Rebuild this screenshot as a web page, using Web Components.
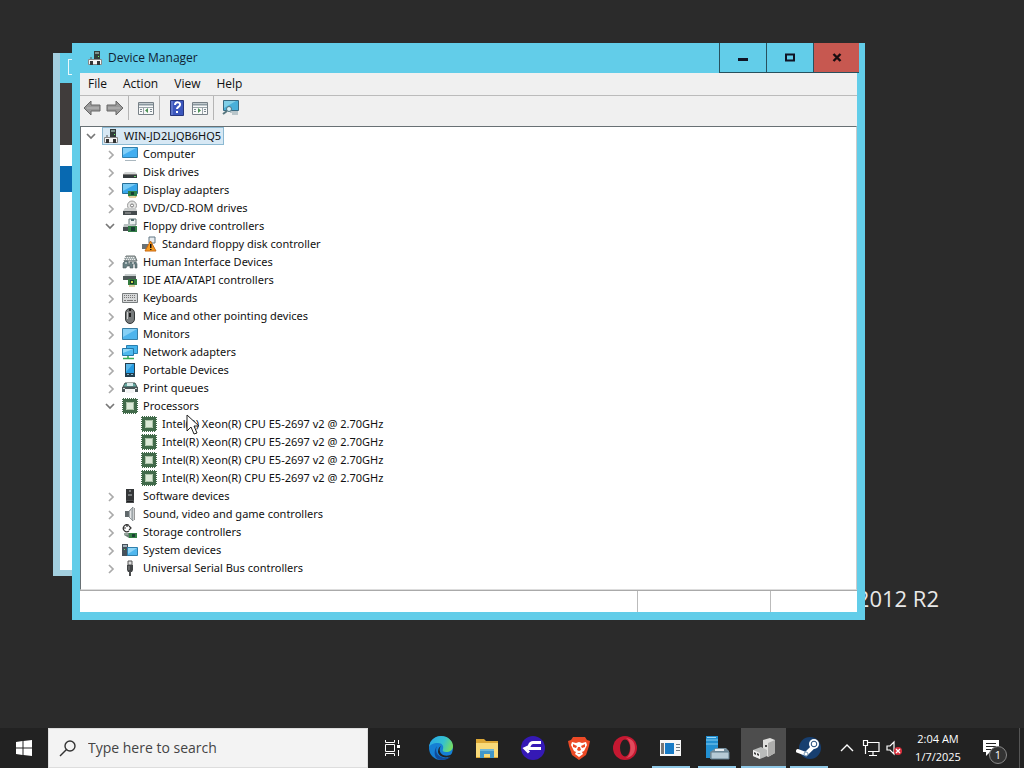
<!DOCTYPE html>
<html lang="en">
<head>
<meta charset="utf-8">
<meta name="viewport" content="width=device-width, initial-scale=1">
<title>Device Manager</title>
<style>
    html, body {
        height: 100%;
        margin: 0;
    }
    body {
        display: flex;
        flex-direction: column;
        overflow: hidden;
        background: #2b2b2b;
        color: #111;
        font: 11px/18px "Open Sans", "Noto Sans", sans-serif;
    }
</style>
</head>
<body>
<dm-desktop>
    <dm-back-window></dm-back-window>
    <dm-window heading="Device Manager">
        <dm-menu-bar slot="bars"></dm-menu-bar>
        <dm-tool-bar slot="bars"></dm-tool-bar>
        <dm-tree></dm-tree>
        <dm-status-bar slot="status"></dm-status-bar>
    </dm-window>
    <dm-cursor></dm-cursor>
</dm-desktop>
<dm-task-bar></dm-task-bar>

<script>
// name: [width, height, drawing]
const ICONS = {
    root: [16, 16, '<path d="M7 1h6v8H7z" fill="#333b3b"/><path d="M8 2h4v2H8z" fill="#7d918d"/><path d="M11 6h1v1h-1z" fill="#6f6"/><path d="M4 7v3M10 9v2" stroke="#555"/><path d="M1.5 9.5h13v5h-13z" fill="#f5f5f5" stroke="#888"/><path d="M3 11h3v4H3zM10 11h3v4h-3z" fill="#333"/>'],
    computer: [16, 16, '<path d="M.5 1.5h15v10H.5z" fill="#42aef0" stroke="#317fac"/><path d="M1 2h13L1 9z" fill="#83cff7"/><path d="M3 14.5h11" stroke="#aab7bf"/>'],
    disk: [16, 16, '<path d="M3 8h10l2 2H1z" fill="#d3d5d5"/><path d="M1 10h14v4H1z" fill="#343a3d"/><path d="M12 12h2v1h-2z" fill="#6dd36b"/><path d="M1 10.5h14" stroke="#777"/>'],
    display: [16, 16, '<path d="M.5 1.5h15v10H.5z" fill="#38a6ea" stroke="#266f98"/><path d="M1 2h13L1 9z" fill="#79cbf5"/><path d="M6 9h9v5H6z" fill="#2c8048"/><path d="M9 10h3v3H9z" fill="#173f33"/><path d="M7 14v1h7v-1" stroke="#c9a443" fill="none"/>'],
    dvd: [16, 16, '<circle cx="10" cy="5.5" r="4.5" fill="#e3e4e3" stroke="#999"/><circle cx="10" cy="5.5" r="1.5" fill="#fff" stroke="#777"/><path d="M3 8h11l1 3H1z" fill="#c9cbcb"/><path d="M1 11h14v4H1z" fill="#444b4d"/><path d="M3 13h6" stroke="#aaa"/>'],
    floppy: [16, 16, '<path d="M7 1h7v6H7z" fill="#e7eeee" stroke="#667b7b"/><path d="M9 1h3v2H9z" fill="#536d70"/><path d="M2 6h8l1 4H1z" fill="#bac2c2"/><path d="M1 9h7v4H1z" fill="#454d50"/><path d="M6 8h9v6H6z" fill="#337e48"/><path d="M9 9h4v4H9z" fill="#183d35"/>'],
    warning: [16, 16, '<path d="M8 1h6v6H8z" fill="#e8ecef" stroke="#607784"/><path d="M1 8h6v5H1z" fill="#697276"/><path d="M9.5 5L15 15H4z" fill="#f39b23" stroke="#c96810"/><path d="M9 8h1.500v4H9zM9 13h1.500v1H9z" fill="#111"/>'],
    hid: [16, 16, '<path d="M4 2h9l2 5H2z" fill="#a6b0b1" stroke="#6f7777"/><path d="M3 3.500h10M2 5.500h12" stroke="#eee" stroke-dasharray="1 1"/><path d="M1 14V9l2-2h3l1 5 1-4h6l1 2v4h-2v-4h-2v4H8v-2H5l-1 2z" fill="#677f82" stroke="#4d5d60" stroke-width=".6"/><path d="M3 9h2M10 9h2" stroke="#fff"/>'],
    ide: [16, 16, '<path d="M3 2h11v3H2z" fill="#c8cece"/><path d="M1 4h13v4H1z" fill="#4e5958"/><path d="M6 7h9v6H6z" fill="#347c3f"/><path d="M8 8h4v4H8z" fill="#18362d"/><path d="M9 9h2v2H9z" fill="#c8d94c"/><path d="M7 14h6" stroke="#bd9c44"/>'],
    keyboard: [16, 16, '<path d="M.5 3.5h15v9H.5z" fill="#d6d8d9" stroke="#787d7e"/><path d="M2 5.5h12M2 7.5h12" stroke="#777" stroke-dasharray="1 1"/><path d="M2 10.5h2m1 0h6m1 0h2" stroke="#777"/>'],
    mouse: [16, 16, '<rect x="3.5" y=".5" width="9" height="15" rx="4.5" fill="#777b7c" stroke="#343838"/><path d="M8 1v8" stroke="#222" stroke-width="2"/><path d="M5.500 4v7" stroke="#ccc"/><path d="M8 3v2" stroke="#ddd"/>'],
    monitor: [16, 16, '<path d="M.5 2.5h15v11H.5z" fill="#4eb4ec" stroke="#387da3"/><path d="M1 3h14L1 11z" fill="#86d0f5"/>'],
    network: [16, 16, '<path d="M4.5 1.5h11v8h-11z" fill="#46b5ed" stroke="#287fb0"/><path d="M.5 4.5h11v7H.5z" fill="#50b9ee" stroke="#2479aa"/><path d="M1 5h10L1 9z" fill="#8ed7f8"/><path d="M6 12v3M1 14.5h11" stroke="#35aa54" stroke-width="1.5"/>'],
    portable: [16, 16, '<path d="M3 1h10v14H3z" fill="#243e4d"/><path d="M4 2h8v9H4z" fill="#249be1"/><path d="M4 2h7l-7 8z" fill="#5bb8e9"/><path d="M5 12h2v1H5zM9 12h2v1H9z" fill="#83b8d1"/>'],
    printer: [16, 16, '<path d="M3 3h10l2 4H1z" fill="#65a9a3" stroke="#40524f"/><path d="M5 3h6v3H5z" fill="#d9eceb"/><path d="M0 7h16v5h-3V9H3v3H0z" fill="#4a5557"/><path d="M4 9h8v4H4z" fill="#f3f5f5"/><path d="M1 8.5h2m10 0h2" stroke="#cfd6d6"/>'],
    cpu: [16, 16, '<path d="M2.5 2.5h11v11h-11z" fill="#dce9d8" stroke="#416a4a" stroke-width="3"/><path d="M.5 1v14M15.5 1v14M1 .5h14M1 15.5h14" stroke="#416a4a" stroke-dasharray="1 1"/><path d="M4.500 4.500h7v7h-7z" fill="none" stroke="#a9c0a6"/>'],
    software: [16, 16, '<path d="M4 1h8v11H4z" fill="#343638"/><path d="M7 2h2v2H7zM6 6h4v2H6z" fill="#777b7d"/><path d="M4 12h8v3H4z" fill="#4a4d4f"/><path d="M5 13h6v1H5z" fill="#1d1e20"/>'],
    sound: [16, 16, '<path d="M3 5h4v6H3z" fill="#60686b"/><path d="M7 5l4-4v14l-4-4z" fill="#b6bcbf" stroke="#737b7e" stroke-width=".7"/><path d="M8.5 5v7" stroke="#e5e6e7"/><path d="M12.5 2v12" stroke="#999"/>'],
    storage: [16, 16, '<path d="M7 1.500a3.500 3.500 0 1 0 0 5.500M5 0v3M1 4h3M7 2l2 2-2 2" fill="none" stroke="#333" stroke-width="1.2"/><path d="M2 9h8l4 2v3H7l-5-3z" fill="#6e8178"/><path d="M7 9h8v5H7z" fill="#348145"/><path d="M10 10h3v3h-3z" fill="#183f31"/><path d="M2 10h4" stroke="#bbc5bd"/>'],
    system: [16, 16, '<path d="M0 2h6v12H0z" fill="#46515b"/><path d="M1 3h4v2H1z" fill="#a3b2bd"/><path d="M2 7h1v1H2z" fill="#6bea74"/><path d="M5.5 5.5h10v8h-10z" fill="#50b7ee" stroke="#2f80ad"/><path d="M6 6h9l-9 6z" fill="#8fd5f7"/>'],
    usb: [16, 16, '<path d="M6 1h4v4H6z" fill="#ddd" stroke="#555"/><path d="M5 5h6v5l-1 2H6l-1-2z" fill="#414446"/><path d="M7 6v4" stroke="#888"/><path d="M8 11v5" stroke="#4a4c4d" stroke-width="2"/>'],
    open: [12, 12, '<path d="M2 4l4 4 4-4" fill="none" stroke="#777" stroke-width="1.7"/>'],
    closed: [12, 12, '<path d="M5 3l4 4-4 4" fill="none" stroke="#aaa" stroke-width="1.7"/>'],

    back: [18, 18, '<path d="M1 9l7-7v4h9v6H8v4z" fill="#999" stroke="#666"/><path d="M4 9h12" stroke="#bbb"/>'],
    forward: [18, 18, '<path d="M17 9l-7-7v4H1v6h9v4z" fill="#999" stroke="#666"/><path d="M2 9h12" stroke="#bbb"/>'],
    console: [18, 18, '<path d="M1.5 3.5h15v12h-15z" fill="#f8f9f9" stroke="#778087"/><path d="M2 5.500h14" stroke="#8b98a0" stroke-width="2"/><path d="M2 8.500h14M6.500 8v7" stroke="#9aa4aa"/><path d="M3 10.500h2m-2 2h2M13 10.500h2m-2 2h2" stroke="#7b8890"/><path d="M11 9v5l-3-2.500z" fill="#4d9255"/>'],
    help: [18, 18, '<path d="M2.5 1.5h13v15h-13z" fill="#3b56bd" stroke="#26367e"/><path d="M4 2v14" stroke="#8294d9"/><path d="M7 6c0-4 6-3 5 0-.5 2-3 2-3 4" fill="none" stroke="#fff" stroke-width="2"/><path d="M8 12h2v2H8z" fill="#fff"/>'],
    actions: [18, 18, '<path d="M1.5 3.5h15v12h-15z" fill="#f8f9f9" stroke="#778087"/><path d="M2 5.500h14" stroke="#8b98a0" stroke-width="2"/><path d="M2 8.500h14M11.500 8v7" stroke="#9aa4aa"/><path d="M13 10.500h2m-2 2h2M3 10.500h2m-2 2h2" stroke="#7b8890"/><path d="M7 9v5l3-2.500z" fill="#4d9255"/>'],
    scan: [18, 18, '<path d="M1.5 1.5h15v10h-15z" fill="#48afd9" stroke="#396b83"/><path d="M2 2h12L2 9z" fill="#80cfe8"/><path d="M8 13h8M10 15h6" stroke="#839ba4"/><circle cx="7" cy="10" r="2.5" fill="#d8f1fa" stroke="#4c737f"/><path d="M5 12l-4 3" stroke="#58767e" stroke-width="2"/>'],
    minimize: [16, 16, '<path d="M3 8h10v3H3z" fill="#101425"/>'],
    maximize: [16, 16, '<path d="M4 4.500h8v6H4z" fill="none" stroke="#101425" stroke-width="2"/>'],
    close: [16, 16, '<path d="M4.500 4l7 7M11.500 4l-7 7" stroke="#180d10" stroke-width="2.400"/>'],

    start: [18, 18, '<path d="M1 3l6.500-1v6.500H1zM8.500 2L17 1v7.500H8.500zM1 9.500h6.500V16L1 15zM8.500 9.500H17V17l-8.500-1z" fill="#fff"/>'],
    search: [18, 18, '<circle cx="11" cy="7" r="5" fill="none" stroke="#333" stroke-width="1.4"/><path d="M7.500 10.500L1 17" stroke="#333" stroke-width="1.5"/>'],
    tasks: [18, 18, '<path d="M2.500 5.500h9v7h-9zM2.500 1v2.500h9V1M2.500 17v-2.500h9V17M15.500 1v4M15.500 11v6" fill="none" stroke="#fff"/><path d="M14 6h3v3h-3z" fill="#fff"/>'],
    edge: [26, 26, '<defs><linearGradient id="a" x2="1" y1=".2" y2=".5"><stop stop-color="#29a9e6"/><stop offset=".6" stop-color="#35c1cf"/><stop offset="1" stop-color="#73dc65"/></linearGradient></defs><circle cx="13" cy="13" r="12" fill="#1680d4"/><path d="M1 12C2 5 7 1 13 1c7 0 12 5 12 10 0 4-3 6-7 6-3 0-4-1-3-3 1-3-1-6-5-6-5 0-8 2-9 4z" fill="url(#a)"/><path d="M9 11c-3 7 2 12 9 12 2 0 4-1 5-2-2 3-6 4-10 4C6 25 5 16 9 11z" fill="#104b9c"/><path d="M13 11c-2 2-2 7 2 9 3 1 6 1 9-1l-1 2c-5 3-12 1-13-4 0-3 1-5 3-6z" fill="#222"/>'],
    explorer: [26, 26, '<path d="M2 4h8l2 2h12v17H2z" fill="#dca735"/><path d="M2 8h22v14H2z" fill="#f9da79"/><path d="M6 15h14v8h-4v-4h-6v4H6z" fill="#4297c9"/><path d="M6 14h14v2H6z" fill="#72b8d6"/>'],
    falcon: [26, 26, '<circle cx="13" cy="13" r="12" fill="#3519b5"/><path d="M21 7.500h-8c-3 0-3 2-4 4l-4 2 4 4M8 13.500h13" fill="none" stroke="#fff" stroke-width="3"/>'],
    brave: [26, 26, '<path d="M7 2h12l2 3 3 1-1 5-3 9-7 5-7-5-3-9-1-5 3-1z" fill="#ed4a26"/><path d="M6 7l4 1 3-1 3 1 4-1 1 3-3 6-2 1 1 2-4 3-4-3 1-2-2-1-3-6z" fill="#fff"/><path d="M7 9l4 2-1 2-3-1zM19 9l-4 2 1 2 3-1zM12 12h2l1 3-2 1-2-1zM11 18l2 1 2-1" fill="#ed4a26"/>'],
    opera: [26, 26, '<circle cx="13" cy="13" r="12" fill="#c51831"/><path d="M14 3c7 1 9 5 9 10s-3 9-9 10c6-3 6-17 0-20z" fill="#e04a5c"/><ellipse cx="13" cy="13" rx="5" ry="8.5" fill="#222"/>'],
    window: [26, 26, '<path d="M2 5h21v16H2z" fill="#f7f7f7"/><path d="M3 8h3v11H3z" fill="#777"/><path d="M7 8h9v11H7z" fill="#187bc6"/><path d="M18 9.500h4m-4 3h4m-4 3h4" stroke="#6f7980"/>'],
    server: [26, 26, '<path d="M2 1h12v22H2z" fill="#2290d2"/><path d="M2 5h12M2 9h12" stroke="#81ccf1"/><path d="M3 2h9v1H3z" fill="#9cd6f4"/><path d="M9 15l3-2h10l3 3v8H6v-7z" fill="#7891a0"/><path d="M7 17h18v7H7z" fill="#b6cad5" stroke="#5f7a8a"/><path d="M11 15h9" stroke="#e6edf1" stroke-width="2"/>'],
    devices: [26, 26, '<path d="M12 5l7-2 5 2v13l-7 4-5-4z" fill="#dfdfdd"/><path d="M17 8l7-3v13l-7 4z" fill="#adadab"/><path d="M2 15l8-3 6 3v6l-7 3-7-3z" fill="#b9bbba"/><path d="M2 15l7 3v6l-7-3z" fill="#eee"/><path d="M3 17l2 1v2l-2-1zM6 18l2 1v2l-2-1zM14 10h2v2h-2z" fill="#444"/>'],
    steam: [26, 26, '<circle cx="14" cy="13" r="11" fill="#173f70"/><path d="M2 16l8 3 9-9" fill="none" stroke="#fff" stroke-width="4" stroke-linecap="round"/><circle cx="18" cy="9" r="5" fill="#fff"/><circle cx="18" cy="9" r="2.8" fill="#fff" stroke="#234a78"/><circle cx="10" cy="19" r="2" fill="none" stroke="#7495b1"/>'],
    up: [18, 18, '<path d="M3 12l6-6 6 6" fill="none" stroke="#fff" stroke-width="1.4"/>'],
    wired: [18, 18, '<path d="M5 3.500h12v9H6M11 13v3M7 16.500h8M1.500 1.500h4v5h-4zM3.500 7v8" fill="none" stroke="#fff" stroke-width="1.2"/>'],
    muted: [18, 18, '<path d="M1 7h3l4-4v12l-4-4H1z" fill="none" stroke="#fff" stroke-width="1.2"/><circle cx="12" cy="12" r="4" fill="#d92f3c"/><path d="M10 10l4 4m0-4l-4 4" stroke="#fff" stroke-width="1.3"/>'],
    note: [18, 18, '<path d="M1 1h16v12H8l-4 4v-4H1z" fill="#fff"/><path d="M4 4.500h10m-10 3h10m-10 3h6" stroke="#222"/>']
};

class DmIcon extends HTMLElement {
    constructor() {
        super();
        this.attachShadow({mode: 'open'});
    }

    connectedCallback() {
        const [width, height, shapes] = ICONS[this.getAttribute('name')];
        this.shadowRoot.innerHTML = `
            <style>
                :host { display: block; flex: none; }
                svg { display: block; }
            </style>
            <svg width="${width}" height="${height}" viewBox="0 0 ${width} ${height}" aria-hidden="true">${shapes}</svg>
        `;
    }
}

class DmDesktop extends HTMLElement {
    constructor() {
        super();
        this.attachShadow({mode: 'open'});
        this.shadowRoot.innerHTML = `
            <style>
                :host {
                    display: block;
                    position: relative;
                    flex: 1;
                    min-height: 0;
                }
                .edition {
                    position: absolute;
                    right: 85px;
                    bottom: 114px;
                    color: #e8e8e8;
                    font-size: 22px;
                    line-height: 32px;
                }
            </style>
            <div class="edition">2012 R2</div>
            <slot></slot>
        `;
    }
}

class DmBackWindow extends HTMLElement {
    constructor() {
        super();
        this.attachShadow({mode: 'open'});
        this.shadowRoot.innerHTML = `
            <style>
                :host {
                    position: absolute;
                    left: 53px;
                    right: 200px;
                    top: 53px;
                    bottom: 152px;
                    display: flex;
                    flex-direction: column;
                    box-sizing: border-box;
                    border: solid #a3cfdf;
                    border-width: 0 7px 6px;
                    background: #fff;
                }
                .title { height: 30px; padding: 6px 8px; box-sizing: border-box; background: #62cde9; }
                .title span { display: block; width: 14px; height: 14px; border: 1px solid #e8f8fc; }
                .banner { height: 62px; background: #403c3b; }
                .selected { height: 26px; margin-top: 21px; background: #0869b1; }
            </style>
            <div class="title"><span></span></div>
            <div class="banner"></div>
            <div class="selected"></div>
        `;
    }
}

class DmWindow extends HTMLElement {
    constructor() {
        super();
        this.attachShadow({mode: 'open'});
    }

    connectedCallback() {
        this.shadowRoot.innerHTML = `
            <style>
                :host {
                    position: absolute;
                    left: 72px;
                    right: 159px;
                    top: 43px;
                    display: flex;
                    flex-direction: column;
                    background: #62cde9;
                    box-sizing: border-box;
                    padding: 0 8px 8px;
                }
                header {
                    display: flex;
                    height: 30px;
                    margin-right: -2px;
                    padding-left: 7px;
                    align-items: center;
                    gap: 5px;
                    color: #123;
                    font-size: 12px;
                }
                h1 { flex: 1; margin: 0; font: inherit; }
                .controls { display: flex; align-self: stretch; }
                button {
                    display: grid;
                    place-items: center;
                    width: 47px;
                    padding: 0;
                    border: solid #28515e;
                    border-width: 0 0 1px 1px;
                    background: none;
                }
                button.close { width: 46px; background: #c75850; }
                .body { background: #f0f0f0; }
            </style>
            <header>
                <dm-icon name="root"></dm-icon>
                <h1>${this.getAttribute('heading')}</h1>
                <div class="controls">
                    <button aria-label="Minimize"><dm-icon name="minimize"></dm-icon></button>
                    <button aria-label="Maximize"><dm-icon name="maximize"></dm-icon></button>
                    <button class="close" aria-label="Close"><dm-icon name="close"></dm-icon></button>
                </div>
            </header>
            <div class="body">
                <slot name="bars"></slot>
                <slot></slot>
                <slot name="status"></slot>
            </div>
        `;
    }
}

class DmMenuBar extends HTMLElement {
    constructor() {
        super();
        this.attachShadow({mode: 'open'});
        this.shadowRoot.innerHTML = `
            <style>
                :host { display: flex; height: 22px; border-bottom: 1px solid #bbb; }
                button {
                    padding: 0 8px;
                    border: 0;
                    background: none;
                    color: inherit;
                    font: inherit;
                    font-size: 12px;
                }
            </style>
            <button>File</button>
            <button>Action</button>
            <button>View</button>
            <button>Help</button>
        `;
    }
}

class DmToolBar extends HTMLElement {
    constructor() {
        super();
        this.attachShadow({mode: 'open'});
        this.shadowRoot.innerHTML = `
            <style>
                :host {
                    display: flex;
                    align-items: center;
                    height: 30px;
                    box-sizing: border-box;
                    padding: 0 0 6px;
                }
                button { padding: 0; width: 23px; border: 0; background: none; display: grid; place-items: center; }
                i { width: 1px; height: 24px; margin: 0 5px 0 2px; background: #b5b5b5; }
            </style>
            <button aria-label="Back"><dm-icon name="back"></dm-icon></button>
            <button aria-label="Forward"><dm-icon name="forward"></dm-icon></button>
            <i></i>
            <button aria-label="Show console tree"><dm-icon name="console"></dm-icon></button>
            <i></i>
            <button aria-label="Help"><dm-icon name="help"></dm-icon></button>
            <button aria-label="Show action pane"><dm-icon name="actions"></dm-icon></button>
            <i></i>
            <button aria-label="Scan for hardware changes"><dm-icon name="scan"></dm-icon></button>
        `;
    }
}

const CPU = 'Intel(R) Xeon(R) CPU E5-2697 v2 @ 2.70GHz';

// level, icon, label, state (open, closed or leaf)
const DEVICES = [
    [0, 'root', 'WIN-JD2LJQB6HQ5', 'open'],
    [1, 'computer', 'Computer', 'closed'],
    [1, 'disk', 'Disk drives', 'closed'],
    [1, 'display', 'Display adapters', 'closed'],
    [1, 'dvd', 'DVD/CD-ROM drives', 'closed'],
    [1, 'floppy', 'Floppy drive controllers', 'open'],
    [2, 'warning', 'Standard floppy disk controller', 'leaf'],
    [1, 'hid', 'Human Interface Devices', 'closed'],
    [1, 'ide', 'IDE ATA/ATAPI controllers', 'closed'],
    [1, 'keyboard', 'Keyboards', 'closed'],
    [1, 'mouse', 'Mice and other pointing devices', 'closed'],
    [1, 'monitor', 'Monitors', 'closed'],
    [1, 'network', 'Network adapters', 'closed'],
    [1, 'portable', 'Portable Devices', 'closed'],
    [1, 'printer', 'Print queues', 'closed'],
    [1, 'cpu', 'Processors', 'open'],
    [2, 'cpu', CPU, 'leaf'],
    [2, 'cpu', CPU, 'leaf'],
    [2, 'cpu', CPU, 'leaf'],
    [2, 'cpu', CPU, 'leaf'],
    [1, 'software', 'Software devices', 'closed'],
    [1, 'sound', 'Sound, video and game controllers', 'closed'],
    [1, 'storage', 'Storage controllers', 'closed'],
    [1, 'system', 'System devices', 'closed'],
    [1, 'usb', 'Universal Serial Bus controllers', 'closed']
];

class DmTreeRow extends HTMLElement {
    constructor() {
        super();
        this.attachShadow({mode: 'open'});
    }

    connectedCallback() {
        const state = this.getAttribute('state');
        const toggle = state === 'leaf' ? '' : `
            <button aria-label="Toggle"><dm-icon name="${state}"></dm-icon></button>
        `;
        this.shadowRoot.innerHTML = `
            <style>
                :host {
                    display: flex;
                    height: 18px;
                    align-items: center;
                    padding-left: calc(var(--level) * 19px);
                }
                .toggle { width: 16px; margin-right: 3px; }
                button { display: block; padding: 0 2px; border: 0; background: none; }
                .item {
                    display: flex;
                    align-items: center;
                    gap: 5px;
                    height: 16px;
                    padding-right: 2px;
                    border: 1px solid transparent;
                    white-space: nowrap;
                }
                :host([aria-selected="true"]) .item { border-color: #8cb9d2; background: #d7e8f4; }
            </style>
            <div class="toggle">${toggle}</div>
            <div class="item">
                <dm-icon name="${this.getAttribute('icon')}"></dm-icon>
                <slot></slot>
            </div>
        `;
    }
}

class DmTree extends HTMLElement {
    constructor() {
        super();
        this.attachShadow({mode: 'open'});
        this.shadowRoot.innerHTML = `
            <style>
                :host {
                    display: block;
                    padding: 0 2px 12px;
                    border: 1px solid #687074;
                    border-right-color: #ccc;
                    border-bottom-color: #ddd;
                    background: #fff;
                    font-family: "Noto Sans", "Open Sans", sans-serif;
                }
            </style>
            <div role="tree" aria-label="Devices"></div>
        `;
    }

    connectedCallback() {
        const tree = this.shadowRoot.querySelector('div');
        tree.innerHTML = DEVICES.map(([level, icon, label, state], i) => `
            <dm-tree-row role="treeitem" style="--level: ${level}" icon="${icon}" state="${state}" aria-selected="${i === 0}">${label}</dm-tree-row>
        `).join('');
    }
}

class DmStatusBar extends HTMLElement {
    constructor() {
        super();
        this.attachShadow({mode: 'open'});
        this.shadowRoot.innerHTML = `
            <style>
                :host {
                    display: grid;
                    grid-template-columns: 1fr 132px 86px;
                    gap: 1px;
                    height: 21px;
                    border-top: 1px solid #aaa;
                    background: #bbb;
                }
                div { background: #fff; }
            </style>
            <div></div><div></div><div></div>
        `;
    }
}

class DmCursor extends HTMLElement {
    constructor() {
        super();
        this.attachShadow({mode: 'open'});
        this.shadowRoot.innerHTML = `
            <style>
                :host { position: absolute; left: 186px; top: 414px; }
                svg { display: block; }
            </style>
            <svg width="14" height="21" viewBox="0 0 14 21" aria-hidden="true">
                <path d="M1 1v16l4-4 3 7 3-1-3-7h5z" fill="#fff" stroke="#222"/>
            </svg>
        `;
    }
}

class DmTaskButton extends HTMLElement {
    constructor() {
        super();
        this.attachShadow({mode: 'open'});
    }

    connectedCallback() {
        this.shadowRoot.innerHTML = `
            <style>
                :host { display: flex; width: 46px; }
                button {
                    flex: 1;
                    display: grid;
                    place-items: center;
                    margin: 0 4px;
                    padding: 0;
                    border: solid transparent;
                    border-width: 2px 0;
                    background: none;
                }
                :host([running]) button { border-bottom-color: #8fc8e6; }
                :host([active]) button { margin: 0 0 0 1px; background: #4d4d4d; border-top-color: #4d4d4d; }
            </style>
            <button aria-label="${this.getAttribute('label')}">
                <dm-icon name="${this.getAttribute('icon')}"></dm-icon>
            </button>
        `;
    }
}

class DmTaskBar extends HTMLElement {
    constructor() {
        super();
        this.attachShadow({mode: 'open'});
        this.shadowRoot.innerHTML = `
            <style>
                :host { display: flex; height: 40px; background: #222; color: #fff; }
                button {
                    display: grid;
                    place-items: center;
                    width: 48px;
                    padding: 0;
                    border: 0;
                    background: none;
                    color: inherit;
                    font: inherit;
                }
                .search {
                    display: flex;
                    flex: 0 1 320px;
                    box-sizing: border-box;
                    align-items: center;
                    gap: 11px;
                    padding: 0 10px;
                    border: 1px solid #ddd;
                    background: #f3f3f3;
                }
                input {
                    flex: 1;
                    min-width: 0;
                    padding: 0;
                    border: 0;
                    outline: 0;
                    background: none;
                    font: 14px/20px "Open Sans", "Noto Sans", sans-serif;
                }
                input::placeholder { color: #444; opacity: 1; }
                .apps { display: flex; padding-left: 2px; }
                .tray { display: flex; margin-left: auto; border-right: 1px solid #555; margin-right: 4px; }
                .tray button { width: 24px; }
                .tray .clock { width: 62px; font-size: 11px; line-height: 18px; align-content: center; }
                .tray .notes { position: relative; width: 50px; padding-right: 6px; }
                .badge {
                    position: absolute;
                    right: 12px;
                    bottom: 4px;
                    width: 16px;
                    border: 1px solid #888;
                    border-radius: 50%;
                    background: #333;
                    font-size: 11px;
                    line-height: 16px;
                    text-align: center;
                }
            </style>
            <button aria-label="Start"><dm-icon name="start"></dm-icon></button>
            <label class="search">
                <dm-icon name="search"></dm-icon>
                <input type="text" placeholder="Type here to search" aria-label="Search">
            </label>
            <button aria-label="Task View"><dm-icon name="tasks"></dm-icon></button>
            <div class="apps">
                <dm-task-button icon="edge" label="Edge"></dm-task-button>
                <dm-task-button icon="explorer" label="File Explorer"></dm-task-button>
                <dm-task-button icon="falcon" label="Launcher"></dm-task-button>
                <dm-task-button icon="brave" label="Brave"></dm-task-button>
                <dm-task-button icon="opera" label="Opera"></dm-task-button>
                <dm-task-button icon="window" label="Properties" running></dm-task-button>
                <dm-task-button icon="server" label="Server Manager" running></dm-task-button>
                <dm-task-button icon="devices" label="Device Manager" running active></dm-task-button>
                <dm-task-button icon="steam" label="Steam" running></dm-task-button>
            </div>
            <div class="tray">
                <button aria-label="Hidden icons"><dm-icon name="up"></dm-icon></button>
                <button aria-label="Network"><dm-icon name="wired"></dm-icon></button>
                <button aria-label="Volume"><dm-icon name="muted"></dm-icon></button>
                <button class="clock"><span>2:04 AM</span><span>1/7/2025</span></button>
                <button class="notes" aria-label="Notifications">
                    <dm-icon name="note"></dm-icon>
                    <span class="badge">1</span>
                </button>
            </div>
        `;
    }
}

customElements.define('dm-icon', DmIcon);
customElements.define('dm-desktop', DmDesktop);
customElements.define('dm-back-window', DmBackWindow);
customElements.define('dm-window', DmWindow);
customElements.define('dm-menu-bar', DmMenuBar);
customElements.define('dm-tool-bar', DmToolBar);
customElements.define('dm-tree-row', DmTreeRow);
customElements.define('dm-tree', DmTree);
customElements.define('dm-status-bar', DmStatusBar);
customElements.define('dm-cursor', DmCursor);
customElements.define('dm-task-button', DmTaskButton);
customElements.define('dm-task-bar', DmTaskBar);
</script>
</body>
</html>
